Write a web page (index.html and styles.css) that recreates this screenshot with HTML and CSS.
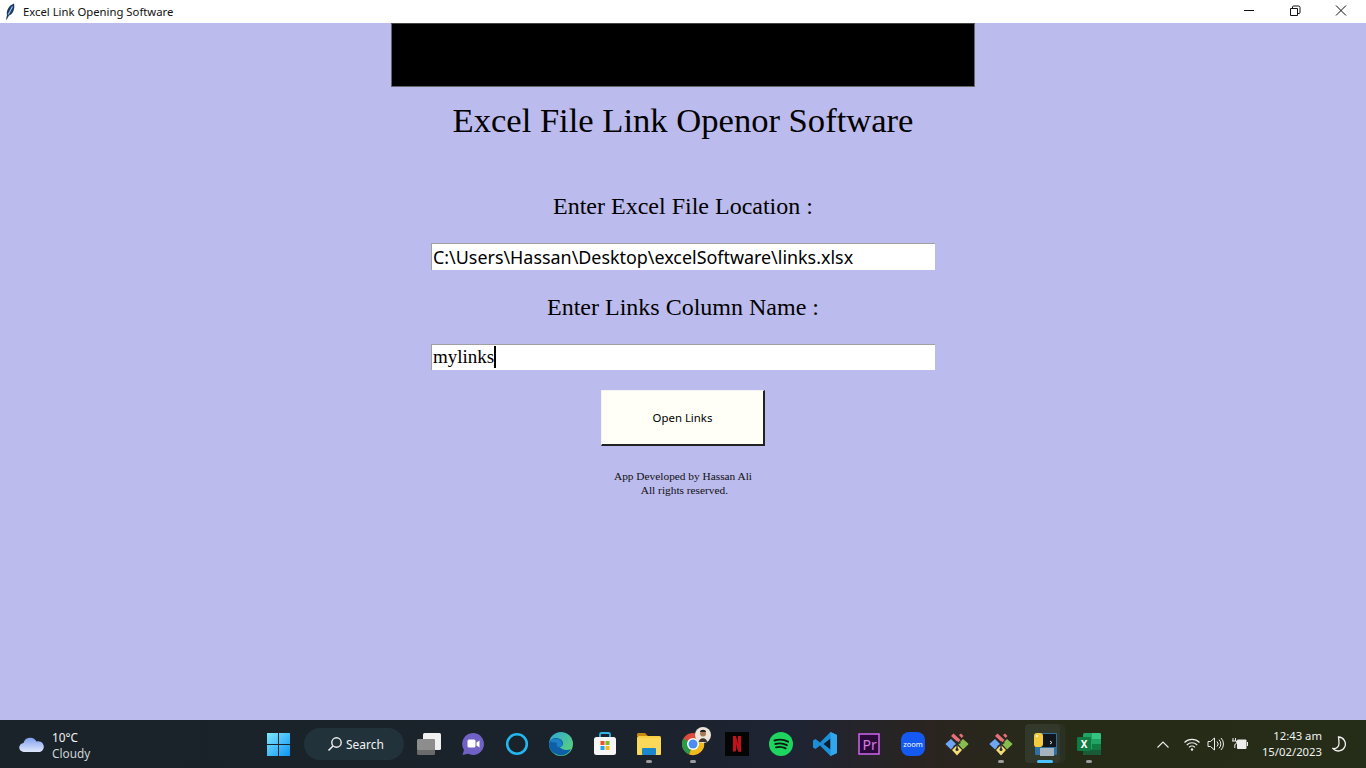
FILE: index.html
```html
<!DOCTYPE html>
<html lang="en">
<head>
<meta charset="utf-8">
<title>Excel Link Opening Software</title>
<link rel="stylesheet" href="styles.css">
</head>
<body>
<header class="titlebar">
  <svg class="feather" width="10" height="17" viewBox="0 0 10 17"><path d="M1 16.500L2 12C1 8 3.500 2.500 9 .5c1 5-.5 10.500-5 12L1.800 16.500z" fill="#1b3a62"/><path d="M3.300 11.500L7.500 3.500" stroke="#9cc0e4" stroke-width="1.200"/></svg>
  <span class="wintitle">Excel Link Opening Software</span>
  <div class="winbtns">
    <svg width="46" height="23" viewBox="0 0 46 23"><path d="M18 10.500H28" stroke="#111" fill="none"/></svg>
    <svg width="46" height="23" viewBox="0 0 46 23"><path d="M18.500 8.500h7v7h-7zM20.500 8.500v-1.500a1 1 0 0 1 1-1h5a1.500 1.500 0 0 1 1.500 1.500v5a1 1 0 0 1-1 1h-2" stroke="#111" fill="none"/></svg>
    <svg width="46" height="23" viewBox="0 0 46 23"><path d="M18 5.500L28 15.500M28 5.500L18 15.500" stroke="#111" fill="none"/></svg>
  </div>
</header>
<main class="app">
  <div class="banner"></div>
  <h1 class="heading">Excel File Link Openor Software</h1>
  <label class="label label-first">Enter Excel File Location :</label>
  <div class="field field-sans">C:\Users\Hassan\Desktop\excelSoftware\links.xlsx</div>
  <label class="label label-second">Enter Links Column Name :</label>
  <div class="field field-serif">mylinks<span class="caret"></span></div>
  <button class="open" type="button">Open Links</button>
  <p class="credits">App Developed by Hassan Ali<br>&nbsp;All rights reserved.</p>
</main>
<footer class="taskbar">
  <div class="weather">
    <svg width="26" height="18" viewBox="0 0 26 18"><defs><linearGradient id="cl" x1="0" y1="0" x2="0" y2="1"><stop offset="0" stop-color="#7f9ff0"/><stop offset="1" stop-color="#dfe8fb"/></linearGradient></defs><path d="M5 17a4.500 4.500 0 0 1-.5-9 7 7 0 0 1 13-1.500 5.300 5.300 0 0 1 3.500 10.500z" fill="url(#cl)"/></svg>
    <div class="wtext"><span>10°C</span><span class="dim">Cloudy</span></div>
  </div>
  <div class="apps">
    <div class="app-icon win"><svg width="23" height="23" viewBox="0 0 24 24"><defs><linearGradient id="wg" x1="0" y1="0" x2="1" y2="1"><stop offset="0" stop-color="#7de8fd"/><stop offset="1" stop-color="#0f94f5"/></linearGradient></defs><path d="M0 0h11.500v11.500H0zM12.500 0H24v11.500H12.500zM0 12.500h11.500V24H0zM12.500 12.500H24V24H12.500z" fill="url(#wg)"/></svg></div>
    <div class="search"><svg width="16" height="16" viewBox="0 0 16 16"><circle cx="9.500" cy="6.500" r="4.700" fill="none" stroke="#eee" stroke-width="1.400"/><path d="M6 10L1.500 14.500" stroke="#eee" stroke-width="1.600"/></svg><span>Search</span></div>
    <div class="app-icon first"><svg width="24" height="22" viewBox="0 0 24 22"><rect x="6" y="0" width="18" height="17" rx="1.500" fill="#f0f0f0"/><rect x="0" y="6" width="18" height="16" rx="1.500" fill="#6a6a6a"/><rect x="0" y="6" width="18" height="11" rx="1.500" fill="#8d8d8d"/></svg></div>
    <div class="app-icon"><svg width="24" height="24" viewBox="0 0 24 24"><path d="M12 1a11 11 0 1 1-5 20.800L1.500 23 3 18A11 11 0 0 1 12 1z" fill="#6f62c4"/><rect x="6.500" y="7.500" width="8" height="8" rx="1.500" fill="#fff"/><path d="M15.500 10.500l3-2v7l-3-2z" fill="#fff"/></svg></div>
    <div class="app-icon"><svg width="24" height="24" viewBox="0 0 24 24"><circle cx="12" cy="12" r="9.800" fill="none" stroke="#23b7f0" stroke-width="2.600"/></svg></div>
    <div class="app-icon"><svg width="24" height="24" viewBox="0 0 24 24"><defs><linearGradient id="eg" x1="0" y1="0" x2="1" y2="1"><stop offset="0" stop-color="#2fa8d8"/><stop offset="1" stop-color="#5fd86a"/></linearGradient></defs><circle cx="12" cy="12" r="12" fill="url(#eg)"/><path d="M0 12C1 6 7 5 11 7c3 1.500 4 5 2 7h-3c2 4 8 5 12 3-3 6-10 8-15 5C2 20 0 16 0 12z" fill="#0f5ea8"/><path d="M1 9c3-3 9-3 11 0 2 2 2 5 0 6-3 1-5-1-4-4-3-1-5 0-7-2z" fill="#1d7fc4"/></svg></div>
    <div class="app-icon"><svg width="24" height="24" viewBox="0 0 24 24"><path d="M7 6V2.500A1.500 1.500 0 0 1 8.500 1h7A1.500 1.500 0 0 1 17 2.500V6" fill="none" stroke="#2db4e8" stroke-width="1.800"/><rect x="1" y="5" width="22" height="18" rx="2.500" fill="#f6f6f6"/><path d="M7.500 9h4v4h-4z" fill="#e8532c"/><path d="M12.500 9h4v4h-4z" fill="#7fba2a"/><path d="M7.500 14h4v4h-4z" fill="#1ea5ea"/><path d="M12.500 14h4v4h-4z" fill="#fcb814"/></svg></div>
    <div class="app-icon open-app"><svg width="24" height="22" viewBox="0 0 24 22"><path d="M0 1.500A1.500 1.500 0 0 1 1.500 0H8l3 3h-11z" fill="#c88a12"/><rect x="0" y="3" width="24" height="19" rx="1.500" fill="#f8ce42"/><rect x="0" y="5" width="24" height="17" rx="1.500" fill="#fbd85a"/><rect x="5" y="15" width="14" height="7" rx="1" fill="#1a87cc"/></svg></div>
    <div class="app-icon open-app"><svg width="24" height="24" viewBox="0 0 24 24"><circle cx="12" cy="12" r="11" fill="#dd4b3e"/><path d="M12 12L22.500 8.500A11 11 0 0 1 8 22.300z" fill="#f0bb1d"/><path d="M12 12L8 22.300A11 11 0 0 1 2.500 6.500z" fill="#279b47"/><circle cx="12" cy="12" r="6" fill="#fff"/><circle cx="12" cy="12" r="4.500" fill="#4b8df0"/></svg><svg class="avatar" width="16" height="16" viewBox="0 0 16 16"><circle cx="8" cy="8" r="8" fill="#ece6dc"/><circle cx="8" cy="6.500" r="3" fill="#a87a58"/><path d="M5 5c0-3 6-3 6 0z" fill="#222"/><path d="M4 15c0-5 8-5 8 0z" fill="#3b332b"/></svg></div>
    <div class="app-icon"><svg width="24" height="24" viewBox="0 0 24 24"><rect width="24" height="24" fill="#050505"/><path d="M8 4h3l2 8V4h3v16l-3-.400-2-7.600v7.300l-3 .400z" fill="#c8101c"/></svg></div>
    <div class="app-icon"><svg width="24" height="24" viewBox="0 0 24 24"><circle cx="12" cy="12" r="12" fill="#1ed55f"/><path d="M5.500 8.500c4.500-1.300 9.500-1 13.500 1.200M6.300 12c3.800-1 8-.7 11.500 1.200M7 15.300c3.200-.8 6.700-.5 9.600 1" fill="none" stroke="#0c1a10" stroke-width="1.900" stroke-linecap="round"/></svg></div>
    <div class="app-icon"><svg width="24" height="24" viewBox="0 0 24 24"><path d="M17.500 0L24 3v18l-6.500 3L7 13.500 2.500 17 0 15.500V8.500L2.500 7 7 10.500z" fill="#1c8fd8"/><path d="M17.500 6.500L10.500 12l7 5.500z" fill="#0f1c2a"/><path d="M17.500 0L24 3v18l-6.500 3z" fill="#33a7ec"/></svg></div>
    <div class="app-icon"><svg width="22" height="22" viewBox="0 0 22 22"><rect x="1" y="1" width="20" height="20" fill="#2a0a38" stroke="#c462e0" stroke-width="1.600"/><text x="4.500" y="16.500" class="pr">Pr</text></svg></div>
    <div class="app-icon"><svg width="24" height="24" viewBox="0 0 24 24"><rect width="24" height="24" rx="8" fill="#1459f0"/><text x="12" y="14.500" class="zoom">zoom</text></svg></div>
    <div class="app-icon"><svg width="24" height="24" viewBox="0 0 24 24"><path d="M6 7l5 5-5 5.500L.8 12.500a.7.7 0 0 1 0-1z" fill="#6ea6f5"/><path d="M18 7l-5 5 5 5.500 5.200-5a.7.7 0 0 0 0-1z" fill="#86bd4e"/><path d="M12 13l5 5-5 5.500-5-5.500z" fill="#f2dc78"/><path d="M6 4l2.500-2.500 7 6.500L13 10.500z" fill="#e8707a"/><path d="M14 3l2-1.500 2.500 2.500-2 2z" fill="#e8707a"/><path d="M12 9v9M8.500 14.500l7-4" stroke="#2d2d2d" stroke-width="1.300"/><circle cx="12" cy="17.500" r="1.500" fill="#2d2d2d"/></svg></div>
    <div class="app-icon open-app"><svg width="24" height="24" viewBox="0 0 24 24"><path d="M6 7l5 5-5 5.500L.8 12.500a.7.7 0 0 1 0-1z" fill="#6ea6f5"/><path d="M18 7l-5 5 5 5.500 5.200-5a.7.7 0 0 0 0-1z" fill="#86bd4e"/><path d="M12 13l5 5-5 5.500-5-5.500z" fill="#f2dc78"/><path d="M6 4l2.500-2.500 7 6.500L13 10.500z" fill="#e8707a"/><path d="M14 3l2-1.500 2.500 2.500-2 2z" fill="#e8707a"/><path d="M12 9v9M8.500 14.500l7-4" stroke="#2d2d2d" stroke-width="1.300"/><circle cx="12" cy="17.500" r="1.500" fill="#2d2d2d"/></svg></div>
    <div class="app-icon active"><svg width="24" height="24" viewBox="0 0 24 24"><rect x="2" y="1" width="22" height="22" rx="1" fill="#2d6ea3"/><rect x="8" y="2" width="15" height="13" fill="#11161c"/><path d="M17 9l2 1.500-2 1.500" stroke="#ddd" fill="none"/><path d="M1 4a3 3 0 0 1 3-3h3a3 3 0 0 1 3 3v8a3 3 0 0 1-3 3H3a2.500 2.500 0 0 1-2-2.500z" fill="#f6ca3d"/><circle cx="4" cy="4" r="1" fill="#fff"/><rect x="7" y="16" width="14" height="8" fill="#a6b2bc"/></svg></div>
    <div class="app-icon open-app"><svg width="24" height="22" viewBox="0 0 24 22"><rect x="6" y="0" width="18" height="22" rx="1.500" fill="#21a366"/><path d="M15 0h7.500A1.500 1.500 0 0 1 24 1.500V6h-9z" fill="#33c481"/><path d="M15 11h9v5.500h-9z" fill="#107c41"/><path d="M6 16.500h18v4A1.500 1.500 0 0 1 22.500 22h-15A1.500 1.500 0 0 1 6 20.500z" fill="#185c37"/><rect x="0" y="4" width="14" height="14" rx="1.200" fill="#107c41"/><text x="7" y="15" class="xl">X</text></svg></div>
  </div>
  <div class="tray">
    <svg class="t-chev" width="12" height="7" viewBox="0 0 12 7"><path d="M.5 6.500L6 1l5.500 5.500" fill="none" stroke="#eee" stroke-width="1.100"/></svg>
    <svg class="t-wifi" width="16" height="13" viewBox="0 0 16 13"><path d="M.5 4.500a10.500 10.500 0 0 1 15 0M2.800 7a7.300 7.300 0 0 1 10.400 0M5 9.300a4.200 4.200 0 0 1 6 0" fill="none" stroke="#eee" stroke-width="1.100"/><circle cx="8" cy="11.500" r="1.200" fill="#eee"/></svg>
    <svg class="t-vol" width="17" height="14" viewBox="0 0 17 14"><path d="M1 4.500h2.500L7.500 1v12l-4-3.500H1z" fill="none" stroke="#eee"/><path d="M10 4.500a3.500 3.500 0 0 1 0 5M12 2.700a6 6 0 0 1 0 8.600M14 1a8.500 8.500 0 0 1 0 12" fill="none" stroke="#eee"/></svg>
    <svg class="t-bat" width="16" height="12" viewBox="0 0 16 12"><path d="M1 0v3M3.500 0v3M0 3h4.500v1.500a2 2 0 0 1-1.700 2V10" fill="none" stroke="#eee"/><rect x="5" y="1.500" width="9.500" height="9.500" rx="1" fill="#eee"/><rect x="15" y="4" width="1" height="4" fill="#eee"/></svg>
    <div class="clock"><span>12:43 am</span><span>15/02/2023</span></div>
    <svg class="t-moon" width="15" height="16" viewBox="0 0 15 16"><path d="M6.500 1a7 7 0 1 1-5.500 11.500c3.200.5 6-1.500 6-5 0-2.500-.2-4.500-.5-6.500z" fill="none" stroke="#f2f2f2" stroke-width="1.300"/></svg>
  </div>
</footer>
</body>
</html>
```
FILE: styles.css
```css
* { box-sizing: border-box; }
html, body { margin: 0; height: 100%; }
body {
  display: flex;
  flex-direction: column;
  height: 768px;
  overflow: hidden;
  background: #bcbbed;
  font-family: "Liberation Serif", serif;
  color: #000;
}
.titlebar {
  display: flex;
  align-items: center;
  height: 23px;
  flex: none;
  background: #fff;
  padding-left: 5px;
}
.feather { margin-top: -1px; }
.wintitle {
  margin-left: 8px;
  font: 11.300px "Noto Sans", "Open Sans", sans-serif;
  color: #111;
}
.winbtns { display: flex; margin-left: auto; padding-right: 2px; }
.app {
  flex: 1;
  display: flex;
  flex-direction: column;
  align-items: center;
}
.banner {
  width: 584px;
  height: 64px;
  background: #000;
  border: 1px solid #666;
  border-top-color: #444;
}
.heading {
  margin: 12px 0 0;
  height: 42px;
  font-weight: 400;
  font-size: 34.600px;
  line-height: 42px;
  text-align: center;
}
.label { font-size: 24px; line-height: 28px; text-align: center; }
.label-first { margin-top: 51px; }
.label-second { margin-top: 23px; }
.field {
  width: 504px;
  height: 27px;
  margin-top: 23px;
  background: #fff;
  border-top: 1px solid #a0a0a0;
  border-left: 1px solid #a0a0a0;
  padding-left: 1px;
  white-space: nowrap;
}
.field-sans { font: 17.900px/26px "Noto Sans", "Open Sans", sans-serif; }
.field-serif { height: 26px; font: 19px/24px "Liberation Serif", serif; display: flex; }
.caret { width: 2px; height: 22px; margin-top: 1px; background: #000; }
.open {
  width: 164px;
  height: 56px;
  margin-top: 20px;
  background: #fffff8;
  border-right: 2px solid #222;
  border-bottom: 2px solid #222;
  border-top: 1px solid #f4f4f4;
  border-left: 1px solid #f4f4f4;
  font: 11.400px "Noto Sans", "Open Sans", sans-serif;
  color: #000;
  padding: 0;
}
.credits {
  margin: 23px 0 0;
  font-size: 11.350px;
  line-height: 14px;
  text-align: center;
  color: #111;
}
.taskbar {
  flex: none;
  height: 48px;
  display: flex;
  align-items: center;
  position: relative;
  background: linear-gradient(90deg, #1a2329 0%, #1a222b 45%, #1e2433 58%, #2b2420 68%, #262b18 78%, #252c17 100%);
  font-family: "Noto Sans", "Open Sans", sans-serif;
  color: #f2f2f2;
}
.weather {
  width: 256px;
  flex: none;
  display: flex;
  align-items: center;
  padding-left: 19px;
  gap: 7px;
}
.wtext { display: flex; flex-direction: column; margin-top: 1px; font-size: 11.800px; line-height: 16px; }
.dim { color: #cfd3d6; }
.apps { display: flex; align-items: center; height: 48px; }
.app-icon {
  position: relative;
  width: 44px;
  height: 48px;
  flex: none;
  display: flex;
  align-items: center;
  justify-content: center;
}
.app-icon.first { margin-left: 3px; }
.app-icon.win { margin-right: 4px; }
.open-app::after, .active::after {
  content: "";
  position: absolute;
  left: 19px;
  bottom: 5px;
  width: 6px;
  height: 3px;
  border-radius: 2px;
  background: #9b9b9b;
}
.active::before {
  content: "";
  position: absolute;
  left: 2px;
  top: 4px;
  width: 35px;
  height: 39px;
  border-radius: 4px;
  background: #33392a;
  box-shadow: 5px 0 0 #2a3023;
}
.active svg { position: relative; }
.active::after { left: 14px; width: 16px; background: #4cc2ff; }
.avatar { position: absolute; left: 24px; top: 7px; }
.search {
  width: 100px;
  height: 32px;
  flex: none;
  display: flex;
  align-items: center;
  padding-left: 23px;
  gap: 3px;
  border-radius: 16px;
  background: #22323b;
  font-size: 12px;
}
.pr { font: 14px "Noto Sans", sans-serif; fill: #d47be8; }
.zoom { font: 7.500px "Noto Sans", sans-serif; fill: #fff; text-anchor: middle; }
.xl { font: 700 10px "Noto Sans", sans-serif; fill: #fff; text-anchor: middle; }
.tray {
  margin-left: auto;
  display: flex;
  align-items: center;
  padding-right: 19px;
}
.t-chev { margin-right: 15px; }
.t-wifi { margin-right: 7px; }
.t-vol { margin-right: 8px; }
.t-bat { margin-right: 14px; }
.clock {
  display: flex;
  flex-direction: column;
  align-items: flex-end;
  font-size: 11.300px;
  line-height: 16px;
  margin-right: 10px;
}
```
